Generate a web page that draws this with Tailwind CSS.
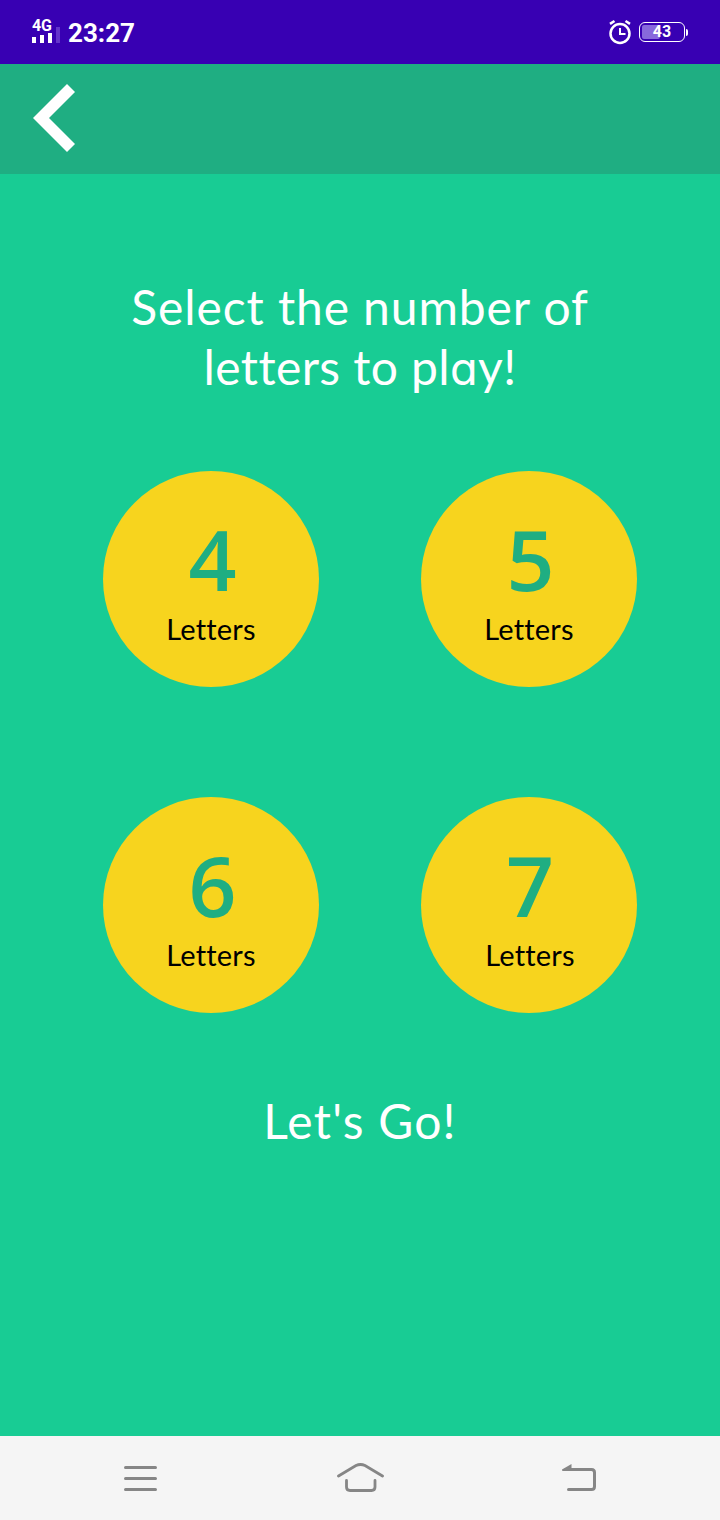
<!DOCTYPE html>
<html lang="en">
<head>
<meta charset="utf-8">
<title>Select letters</title>
<script src="https://cdn.jsdelivr.net/npm/@tailwindcss/browser@4"></script>
</head>
<body class="flex h-[1520px] w-[720px] flex-col overflow-hidden bg-[#18cc94] font-[Lato,sans-serif]">
  <div class="flex h-16 shrink-0 items-center justify-between bg-[#3800b3] pl-8 pr-8 font-[Roboto,sans-serif] text-white">
    <div class="flex items-center">
      <div class="flex w-9 flex-col pb-1">
        <span class="h-[15px] text-[16px] font-bold leading-[15px] tracking-[-0.3px]">4G</span>
        <svg class="-mt-[7px] block" width="30" height="17" viewBox="0 0 30 17"><path fill="#fff" d="M0 11h4v6H0zM8 9h4v8H8zM16 7h4v10h-4z"/><path fill="#6434cb" d="M24 1h4v16h-4z"/></svg>
      </div>
      <span class="pt-[2px] text-[26px] font-bold leading-[30px]">23:27</span>
    </div>
    <div class="flex items-center gap-[7px]">
      <svg width="24" height="26" viewBox="0 0 24 26" fill="none" stroke="#fff"><circle cx="12" cy="14.500" r="9.500" stroke-width="2.500"/><path d="M12 9V15h5.500" stroke-width="2"/><path d="M2 4.800L6.500 2M22 4.800L17.500 2" stroke-width="2.600"/></svg>
      <div class="flex items-center">
        <div class="relative flex h-5 w-[46px] items-center justify-center rounded-[6px] border-[1.5px] border-white">
          <div class="absolute left-[2px] top-[2px] h-[14px] w-[18px] rounded-[2px] bg-[#8869dc]"></div>
          <span class="relative text-[16px] font-bold leading-4">43</span>
        </div>
        <div class="ml-[1px] h-[7px] w-[2px] rounded-r bg-white"></div>
      </div>
    </div>
  </div>
  <div class="h-[110px] shrink-0 bg-[#1fae82] pl-[33px] pt-5">
    <svg width="42" height="68" viewBox="0 0 42 68"><path fill="#fff" d="M34 0L42 8L16 34L42 60L34 68L0 34Z"/></svg>
  </div>
  <main class="flex grow flex-col items-center pt-[103px] text-white">
    <h1 class="text-center text-[48px] leading-[60px]"><span class="block tracking-[0.9px]">Select the number of</span><span class="block h-[60px] tracking-[0.4px]">letters to pl<span class="font-[Inter] text-[45px] leading-none [font-feature-settings:'cv11']">a</span>y!</span></h1>
    <div class="mt-[74px] grid grid-cols-2 gap-x-[102px] gap-y-[110px] pl-5 text-black">
      <button class="flex size-[216px] flex-col items-center rounded-full bg-[#f7d41e] pt-[38px]"><span class="pl-[3px] font-['Open_Sans'] text-[84px] font-semibold leading-[100px] text-[#1fae82]">4</span><span class="pt-px text-[29px] leading-[38px] tracking-[0.2px]">Letters</span></button>
      <button class="flex size-[216px] flex-col items-center rounded-full bg-[#f7d41e] pt-[38px]"><span class="pl-[3px] font-['Open_Sans'] text-[84px] font-semibold leading-[100px] text-[#1fae82]">5</span><span class="pt-px text-[29px] leading-[38px] tracking-[0.2px]">Letters</span></button>
      <button class="flex size-[216px] flex-col items-center rounded-full bg-[#f7d41e] pt-[38px]"><span class="pl-[3px] font-['Open_Sans'] text-[84px] font-semibold leading-[100px] text-[#1fae82]">6</span><span class="pt-px text-[29px] leading-[38px] tracking-[0.2px]">Letters</span></button>
      <button class="flex size-[216px] flex-col items-center rounded-full bg-[#f7d41e] pt-[38px]"><span class="pl-[2px] font-['Open_Sans'] text-[84px] font-semibold leading-[100px] text-[#1fae82]">7</span><span class="pl-[2px] pt-px text-[29px] leading-[38px] tracking-[0.2px]">Letters</span></button>
    </div>
    <div class="mt-[78px] text-[48px] leading-[60px] tracking-[1.2px]">Let's Go!</div>
  </main>
  <nav class="flex h-[84px] shrink-0 items-center justify-between bg-[#f5f5f5] pl-[123px] pr-[123px]">
    <svg width="35" height="28" viewBox="0 0 35 28" fill="none" stroke="#868686" stroke-width="3" stroke-linecap="round"><path d="M2.500 3.500H32.500M2.500 14.500H32.500M2.500 25.500H32.500"/></svg>
    <svg width="48" height="32" viewBox="0 0 48 32" fill="none" stroke="#868686" stroke-width="2.800" stroke-linecap="round"><path d="M2.500 14L20 3.600Q24.500 1.400 29 3.600L46.500 14M10.500 18.500V25Q10.500 28.500 14 28.500H35.500Q39 28.500 39 25V18.500"/></svg>
    <svg width="35" height="28" viewBox="0 0 35 28" fill="none" stroke="#868686" stroke-width="3"><path d="M4 5.500H29.500Q32.500 5.500 32.500 8.500V22.500Q32.500 25.500 29.500 25.500H6.500" stroke-linecap="round"/><path d="M0 5.500L9.500 0V7H1Q-.5 6.500 0 5.500Z" fill="#868686" stroke="none"/></svg>
  </nav>
</body>
</html>
